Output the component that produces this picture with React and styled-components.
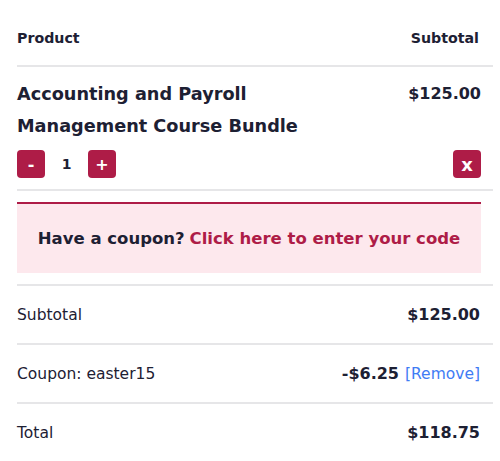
import styled, { createGlobalStyle } from "styled-components";

const GlobalStyle = createGlobalStyle`
  html, body {
    margin: 0;
    padding: 0;
    background: #ffffff;
  }
  body {
    font-family: "DejaVu Sans", "Noto Sans", sans-serif;
    color: #1d2033;
  }
`;

const accent = "#ae1c47";

const Wrapper = styled.div`
  width: 476px;
  padding: 0 7px 0 17px;
`;

const Table = styled.div`
  display: flex;
  flex-direction: column;
`;

const HeadRow = styled.div`
  display: flex;
  justify-content: space-between;
  align-items: center;
  height: 67px;
  padding-top: 11px;
  padding-right: 14px;
  box-sizing: border-box;
  border-bottom: 2px solid #e6e6e8;
  font-size: 14.2px;
  font-weight: 700;
`;

const ItemRow = styled.div`
  display: flex;
  flex-direction: column;
  padding: 11px 12px 11px 0;
  border-bottom: 2px solid #e6e6e8;
`;

const ItemTop = styled.div`
  display: flex;
  justify-content: space-between;
  align-items: flex-start;
`;

const ItemName = styled.div`
  font-size: 17.7px;
  font-weight: 700;
  line-height: 32px;
  width: 300px;
`;

const Price = styled.div`
  font-size: 16px;
  font-weight: 700;
  line-height: 32px;
`;

const Controls = styled.div`
  display: flex;
  justify-content: space-between;
  align-items: center;
  margin-top: 8px;
`;

const Qty = styled.div`
  display: flex;
  align-items: center;
`;

const SquareButton = styled.button`
  width: 28px;
  height: 28px;
  border: none;
  border-radius: 4px;
  background: ${accent};
  color: #ffffff;
  font-family: "DejaVu Sans", sans-serif;
  font-weight: 700;
  font-size: ${(p) => p.$size || 14}px;
  padding: 0;
  display: flex;
  align-items: center;
  justify-content: center;
`;

const QtyValue = styled.span`
  width: 43px;
  text-align: center;
  font-size: 14px;
  font-weight: 700;
`;

const CouponBox = styled.div`
  margin: 11px 12px 11px 0;
  background: #fde8ed;
  border-top: 2px solid ${accent};
  height: 69px;
  display: flex;
  align-items: center;
  justify-content: center;
  font-size: 16.5px;
  font-weight: 700;
`;

const CouponLink = styled.span`
  color: ${accent};
  margin-left: 5px;
`;

const TotalRow = styled.div`
  display: flex;
  justify-content: space-between;
  align-items: center;
  height: 57px;
  padding-right: 13px;
  border-top: 2px solid #e6e6e8;
`;

const Label = styled.span`
  font-size: 15.5px;
  font-weight: 400;
`;

const Amount = styled.span`
  font-size: 16px;
  font-weight: 700;
  display: flex;
  align-items: center;
  gap: 6px;
`;

const RemoveLink = styled.span`
  color: #3f7cf4;
  font-size: 15.5px;
  font-weight: 400;
`;

export default function App() {
  return (
    <>
      <GlobalStyle />
      <Wrapper>
        <Table>
          <HeadRow>
            <span>Product</span>
            <span>Subtotal</span>
          </HeadRow>
          <ItemRow>
            <ItemTop>
              <ItemName>Accounting and Payroll Management Course Bundle</ItemName>
              <Price>$125.00</Price>
            </ItemTop>
            <Controls>
              <Qty>
                <SquareButton $size={16}>-</SquareButton>
                <QtyValue>1</QtyValue>
                <SquareButton $size={16}>+</SquareButton>
              </Qty>
              <SquareButton $size={18}>x</SquareButton>
            </Controls>
          </ItemRow>
          <CouponBox>
            Have a coupon?<CouponLink>Click here to enter your code</CouponLink>
          </CouponBox>
          <TotalRow>
            <Label>Subtotal</Label>
            <Amount>$125.00</Amount>
          </TotalRow>
          <TotalRow>
            <Label>Coupon: easter15</Label>
            <Amount>
              -$6.25 <RemoveLink>[Remove]</RemoveLink>
            </Amount>
          </TotalRow>
          <TotalRow>
            <Label>Total</Label>
            <Amount>$118.75</Amount>
          </TotalRow>
        </Table>
      </Wrapper>
    </>
  );
}
